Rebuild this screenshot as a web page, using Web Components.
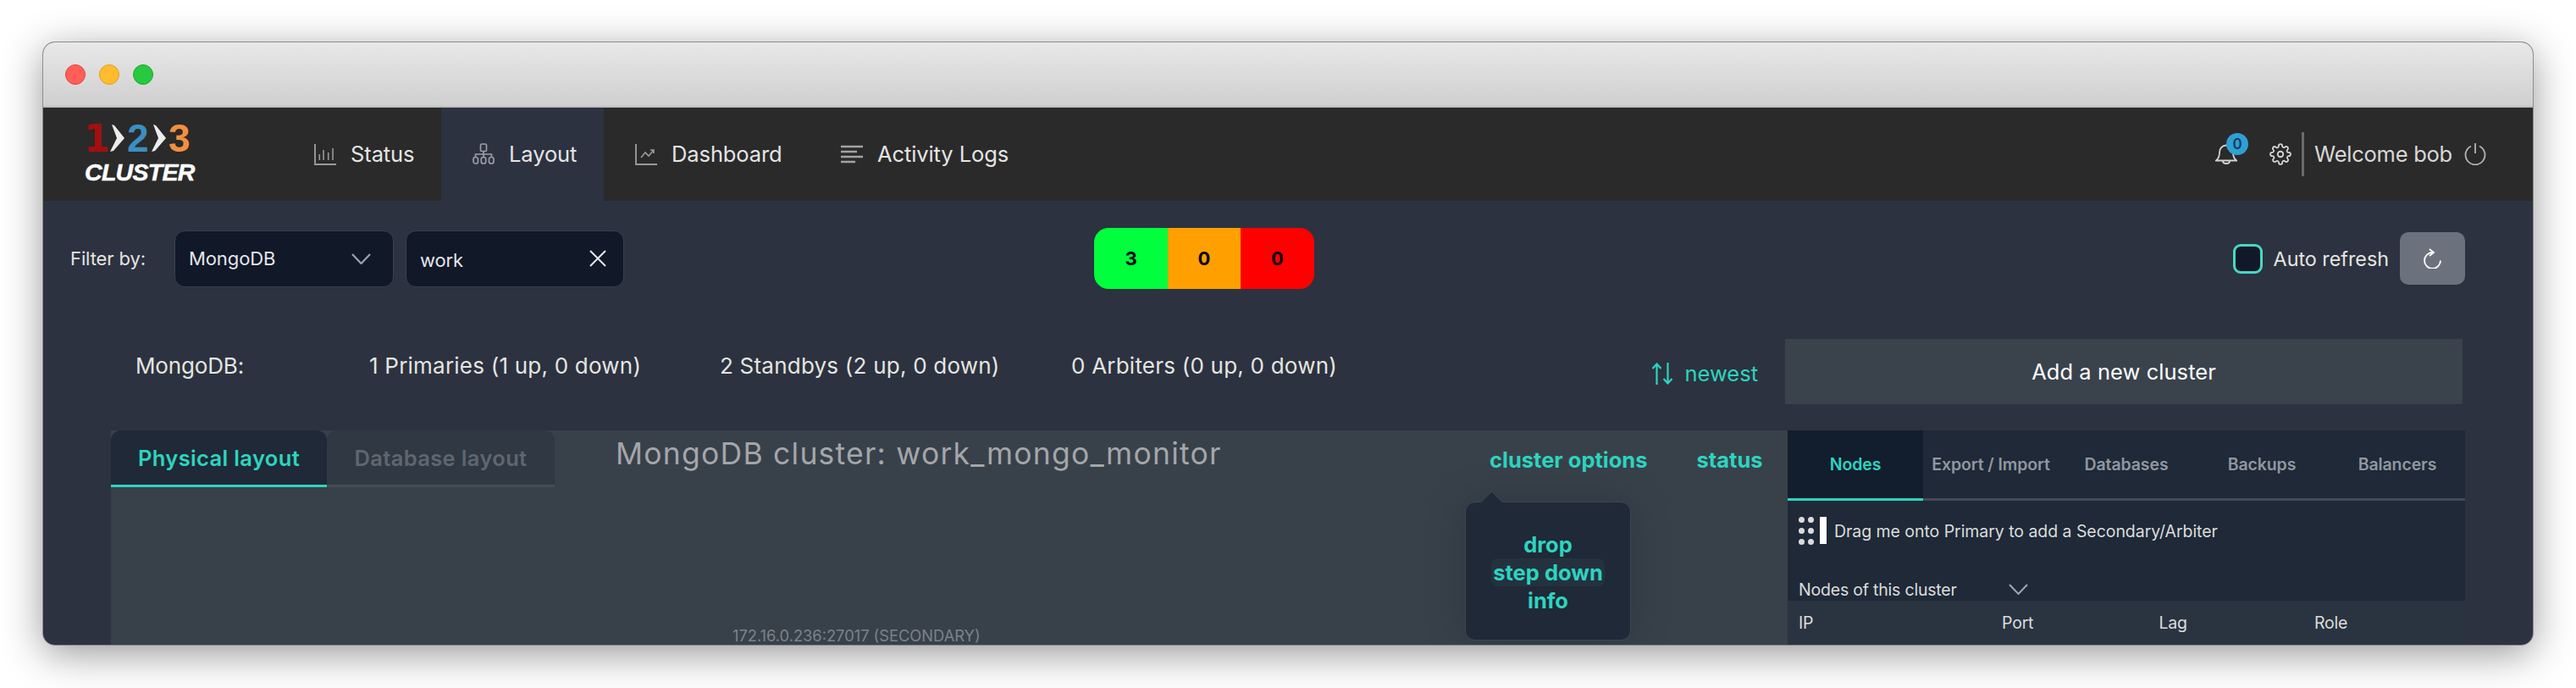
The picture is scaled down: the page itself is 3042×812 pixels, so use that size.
<!DOCTYPE html>
<html><head><meta charset="utf-8">
<style>
html,body{margin:0;padding:0;background:#fff;}
body{height:812px;overflow:hidden;padding:50px 0 0 51px;box-sizing:border-box;font-family:Inter,"Liberation Sans",sans-serif;color:#e5e7eb;}
</style></head><body>
<app-window></app-window>
<script>
function def(name, html){
  customElements.define(name, class extends HTMLElement{
    constructor(){super();this.attachShadow({mode:'open'}).innerHTML=html;}
  });
}
const ICON={
 status:'<svg width="26" height="26" viewBox="0 0 26 26" fill="none" stroke="#9a9a9a" stroke-width="1.6"><path d="M1 1V25H26" stroke-width="1.900"/><path d="M6.300 13V20M11 8V20M16.700 11V20M22 6V20"/></svg>',
 layout:'<svg width="26" height="26" viewBox="0 0 26 26" fill="none" stroke="#9a9ea6" stroke-width="1.700"><rect x="9.500" y="1" width="7" height="8.500" rx="1.500"/><path d="M13 9.500V16M3.500 16.500V13H22.500V16.500"/><rect x="1" y="16.500" width="5.500" height="7.500" rx="2.500"/><rect x="10.250" y="16.500" width="5.500" height="7.500" rx="2.500"/><rect x="19.500" y="16.500" width="5.500" height="7.500" rx="2.500"/></svg>',
 dash:'<svg width="26" height="26" viewBox="0 0 26 26" fill="none" stroke="#9a9a9a" stroke-width="1.600"><path d="M1 1V25H26" stroke-width="1.900"/><path d="M7 17L12 11L16 15L22 8M18 8H22V12"/></svg>',
 logs:'<svg width="26" height="22" viewBox="0 0 26 22" fill="none" stroke="#a3a3a3" stroke-width="2.400"><path d="M0 2H26M0 8H19M0 14H26M0 20H17"/></svg>',
 chev:'<svg width="23" height="13" viewBox="0 0 23 13" fill="none" stroke="#9ca3af" stroke-width="2.200"><path d="M1 1L11.500 12L22 1"/></svg>'
};
const CHEVRON='<svg width="17" height="32" viewBox="0 0 17 32"><polygon points="2,0 5,1 17,16 4,31 0,32 8,16" fill="#ececec"/></svg>';

def('traffic-lights',`<style>:host{display:flex;gap:16px}i{width:24px;height:24px;border-radius:50%;display:block;box-sizing:border-box;border:1px solid}
.r{background:#ff5f57;border-color:#e0443e}.y{background:#febc2e;border-color:#dea123}.g{background:#28c840;border-color:#1aab29}</style><i class="r"></i><i class="y"></i><i class="g"></i>`);

def('title-bar',`<style>:host{display:flex;align-items:center;box-sizing:border-box;height:77px;padding:0 0 0 26px;background:linear-gradient(#e8e8e8,#cfcfcf);border-bottom:2px solid #bdbdbd}</style><traffic-lights></traffic-lights>`);

def('app-logo',`<style>:host{display:flex;flex-direction:column;width:283px;box-sizing:border-box;padding:16px 0 0 48px;font-family:"Liberation Sans",sans-serif;font-weight:700}
.n{display:flex;align-items:baseline;height:40px;padding-left:4px;font-size:46px;line-height:40px}
.one{font-family:"DejaVu Sans",sans-serif;font-size:44px;color:#a50f0f;width:31px;margin-left:-4px}
.c{font-style:italic;font-size:28.500px;line-height:26px;color:#fff;letter-spacing:-.7px;margin-top:7px;padding-left:1px;-webkit-text-stroke:.5px #fff}
svg{display:block;align-self:center;margin-right:3px}.two{width:29px;color:#3a8fc2}.three{color:#f28f3f}</style>
<div class="n"><span class="one">1</span>${CHEVRON}<span class="two">2</span>${CHEVRON}<span class="three">3</span></div>
<div class="c">CLUSTER</div>`);

def('nav-item',`<style>:host{display:flex;align-items:center;box-sizing:border-box;height:110px;padding-left:37px;gap:17px;font-size:25.500px;color:#e5e5e5;letter-spacing:-.1px}
:host([active]){background:#2c3240}
span{display:block;padding-bottom:2px}</style><slot name="icon"></slot><span><slot></slot></span>`);

def('user-menu',`<style>:host{display:flex;align-items:center;margin-left:auto;height:110px;font-size:25.500px;color:#d8d8d8;position:relative}
.bell{position:relative;width:26px;height:26px;margin-right:38px}
.badge{position:absolute;left:13px;top:-12px;width:26px;height:26px;border-radius:50%;background:#2f9fd4;color:#123c5e;font-size:17px;font-weight:600;display:flex;align-items:center;justify-content:center}
.div{width:3px;height:52px;background:#6b6b6b;margin:0 12px 0 12px}
svg{display:block}</style>
<div class="bell"><svg width="26" height="26" viewBox="0 0 26 26" fill="none" stroke="#d4d4d4" stroke-width="1.800"><path d="M1 20.500C4 18 5 15 5 11C5 6 8.500 2.500 13 2.500C17.500 2.500 21 6 21 11C21 15 22 18 25 20.500Z"/><path d="M9 21C9 25 17 25 17 21"/></svg><div class="badge">0</div></div>
<svg width="26" height="26" viewBox="0 0 24 24" fill="none" stroke="#d4d4d4" stroke-width="1.700"><circle cx="12" cy="12" r="3"/><path d="M19.400 15a1.650 1.650 0 0 0 .33 1.820l.06.060a2 2 0 1 1-2.830 2.830l-.06-.060a1.650 1.650 0 0 0-2.820 1.170V21a2 2 0 1 1-4 0v-.090a1.650 1.650 0 0 0-2.820-1.170l-.06.060a2 2 0 1 1-2.830-2.830l.06-.060A1.650 1.650 0 0 0 3.090 14H3a2 2 0 1 1 0-4h.090a1.650 1.650 0 0 0 1.170-2.820l-.06-.060A2 2 0 1 1 7.030 4.290l.06.060A1.650 1.650 0 0 0 10 3.090V3a2 2 0 1 1 4 0v.090a1.650 1.650 0 0 0 2.820 1.170l.06-.060a2 2 0 1 1 2.830 2.830l-.06.060A1.650 1.650 0 0 0 20.910 10H21a2 2 0 1 1 0 4h-.090a1.650 1.650 0 0 0-1.510 1z"/></svg>
<div class="div"></div><span style="padding-bottom:2px;letter-spacing:-.25px">Welcome bob</span>
<svg width="26" height="26" viewBox="0 0 26 26" fill="none" stroke="#b5b5b5" stroke-width="1.800" style="margin:0 55px 0 14px"><path d="M8 3.500A11.500 11.500 0 1 0 18 3.500M13 0V12"/></svg>`);

def('nav-bar',`<style>:host{display:flex;height:110px;background:#2a2a2a}svg{display:block}</style>
<app-logo></app-logo>
<nav-item style="width:187px"><span slot="icon">${ICON.status}</span>Status</nav-item>
<nav-item active style="width:192px"><span slot="icon">${ICON.layout}</span>Layout</nav-item>
<nav-item style="width:243px"><span slot="icon">${ICON.dash}</span>Dashboard</nav-item>
<nav-item style="width:240px"><span slot="icon">${ICON.logs}</span>Activity Logs</nav-item>
<user-menu></user-menu>`);

def('filter-box',`<style>:host{display:flex;align-items:center;justify-content:space-between;box-sizing:border-box;height:67px;background:#111827;border:1.500px solid #374151;border-radius:12px;font-size:22px;color:#e5e7eb;padding:0 20px 0 16px;letter-spacing:-.1px}</style><slot></slot><slot name="end"></slot>`);

def('status-pill',`<style>:host{display:flex;height:72px;width:260px;border-radius:17px;overflow:hidden;font-weight:700;font-size:22px;color:#000}
div{display:flex;align-items:center;justify-content:center}</style>
<div style="background:#00ff3c;width:87px">3</div><div style="background:#ffa000;width:86px">0</div><div style="background:#ff0000;width:87px">0</div>`);

def('refresh-control',`<style>:host{display:flex;align-items:center;margin-left:auto;font-size:23.300px;color:#e5e5e0}
.cb{width:35px;height:35px;box-sizing:border-box;border:3.500px solid #45d9c4;background:#111827;border-radius:9px;margin-right:13px}
.btn{width:77px;height:62px;background:#6c727d;border-radius:10px;margin-left:13px;display:flex;align-items:center;justify-content:center}</style>
<div class="cb"></div><span>Auto refresh</span>
<div class="btn"><svg width="21" height="24" viewBox="0 0 21 24" fill="none" stroke="#fff" stroke-width="1.800" style="display:block"><path d="M10.500 5A9.500 9.500 0 1 0 20 14.500"/><path d="M7 1L12 5L7 9"/></svg></div>`);

def('filter-bar',`<style>:host{display:flex;align-items:center;height:72px;margin-top:32px;padding:0 80px 0 32px;font-size:22px;color:#e5e5e0}
.lbl{width:123px;letter-spacing:-.1px}</style>
<span class="lbl">Filter by:</span>
<filter-box style="width:259px"><span>MongoDB</span><span slot="end" style="display:flex;margin-right:6px">${ICON.chev}</span></filter-box>
<filter-box style="width:258px;margin:0 555px 0 14px"><span style="padding-top:4px">work</span><svg slot="end" width="20" height="20" viewBox="0 0 20 20" stroke="#e5e7eb" stroke-width="2" style="display:block"><path d="M1 1L19 19M19 1L1 19"/></svg></filter-box>
<status-pill></status-pill>
<refresh-control></refresh-control>`);

def('summary-row',`<style>:host{display:flex;height:77px;margin-top:59px;padding:0 83px 0 109px;font-size:26px;color:#e5e5e0;letter-spacing:.22px}
.s{padding-top:19px;line-height:26px;white-space:nowrap}
.new{display:flex;align-items:center;gap:13px;margin-left:auto;color:#2dd4bf;margin-right:32px;padding-top:4px;font-size:25.500px;letter-spacing:0}
.add{width:800px;background:#3a424c;color:#fff;display:flex;align-items:center;justify-content:center;letter-spacing:.05px;font-size:25.500px}
svg{display:block}</style>
<span class="s" style="width:276px;letter-spacing:-.15px">MongoDB:</span>
<span class="s" style="width:414px">1 Primaries (1 up, 0 down)</span>
<span class="s" style="width:415px">2 Standbys (2 up, 0 down)</span>
<span class="s">0 Arbiters (0 up, 0 down)</span>
<span class="new"><svg width="26" height="26" viewBox="0 0 26 26" fill="none" stroke="#2dd4bf" stroke-width="2.200"><path d="M6.500 26V1M1.500 7L6.500 1.500L11.500 7M19.500 0V25M14.500 19L19.500 24.500L24.500 19"/></svg>newest</span>
<div class="add">Add a new cluster</div>`);

def('layout-tab',`<style>:host{display:flex;align-items:center;justify-content:center;box-sizing:border-box;height:67px;border-bottom:3px solid #434c57;background:#2f3843;color:#5f666f;font-size:25.500px;font-weight:600;border-radius:12px 12px 0 0;letter-spacing:.35px;white-space:nowrap}
:host([active]){background:#1f2937;color:#2dd4bf;border-bottom-color:#2dd4bf}</style><slot></slot>`);

def('options-popover',`<style>:host{position:absolute;left:1599px;top:84px;width:196px;height:164px;box-sizing:border-box;padding-top:3px;background:#1f2937;border:1.500px solid #3c4655;border-radius:12px;box-shadow:0 0 50px rgba(0,0,0,.18);display:flex;flex-direction:column;align-items:center;justify-content:center;color:#2dd4bf;font-size:25.500px;font-weight:700;line-height:33px}
.a{position:absolute;left:21px;top:-10px;width:18px;height:18px;background:#1f2937;border-left:1.500px solid #3c4655;border-top:1.500px solid #3c4655;transform:rotate(45deg)}
.h{background:#243240;border-radius:8px;padding:0 2px}</style>
<div class="a"></div><span>drop</span><span class="h">step down</span><span>info</span>`);

def('cluster-panel',`<style>:host{display:block;position:relative;flex:1;height:253px;background:#38414a;overflow:hidden}
.top{display:flex;align-items:flex-start}
.t{margin:8px 0 0 72px;font-size:35.500px;line-height:40px;color:#a4a6aa;letter-spacing:1.230px;white-space:nowrap}
.act{position:absolute;top:20px;left:1628px;color:#2dd4bf;font-size:25.500px;font-weight:700;line-height:30px;white-space:nowrap}
.node{position:absolute;left:734px;top:232px;font-size:18.300px;line-height:20px;color:#7b828b;white-space:nowrap}</style>
<div class="top"><layout-tab active style="width:255px">Physical layout</layout-tab><layout-tab style="width:269px">Database layout</layout-tab><div class="t">MongoDB cluster: work_mongo_monitor</div></div>
<div class="act"><span>cluster options</span><span style="margin-left:58px">status</span></div>
<options-popover></options-popover>
<div class="node">172.16.0.236:27017 (SECONDARY)</div>`);

def('side-tab',`<style>:host{display:flex;align-items:center;justify-content:center;height:83px;box-sizing:border-box;border-bottom:3px solid #434c57;font-size:19.500px;font-weight:600;color:#9097a0;letter-spacing:-.1px;white-space:nowrap}
:host([active]){background:#121e2e;color:#2dd4bf;border-bottom-color:#2dd4bf}</style><slot></slot>`);

def('side-panel',`<style>:host{display:block;width:800px;height:253px;background:#1f2937;font-size:19.500px;color:#dcdcdc;overflow:hidden;letter-spacing:-.2px}
.tabs{display:grid;grid-template-columns:repeat(5,160px)}
.drag{display:flex;align-items:center;height:32px;margin-top:19px;padding-left:13px;letter-spacing:-.05px}
.drag span{padding-top:2px}
.dots{display:grid;grid-template-columns:7px 7px;column-gap:4px;row-gap:6px;margin-right:7px}
.dots i{width:7px;height:7px;border-radius:50%;background:#dcdcdc}
.bar{width:8px;height:32px;background:#fff;margin-right:9px}
.sec{display:flex;align-items:center;height:27px;margin-top:40px;padding-left:13px}
.sec span{width:248px}
.hdr{display:grid;grid-template-columns:240px 185.500px 183.500px 1fr;height:52px;align-items:center;padding-left:13px;background:#2a3440}
svg{display:block}</style>
<div class="tabs"><side-tab active>Nodes</side-tab><side-tab>Export / Import</side-tab><side-tab>Databases</side-tab><side-tab>Backups</side-tab><side-tab>Balancers</side-tab></div>
<div class="drag"><div class="dots"><i></i><i></i><i></i><i></i><i></i><i></i></div><div class="bar"></div><span>Drag me onto Primary to add a Secondary/Arbiter</span></div>
<div class="sec"><span>Nodes of this cluster</span><svg width="23" height="13" viewBox="0 0 23 13" fill="none" stroke="#a0a6ae" stroke-width="2"><path d="M1 1L11.500 12L22 1"/></svg></div>
<div class="hdr"><div>IP</div><div>Port</div><div>Lag</div><div>Role</div></div>`);

def('work-area',`<style>:host{display:flex;margin-top:31px;padding:0 80px}</style><cluster-panel></cluster-panel><side-panel></side-panel>`);

def('app-window',`<style>:host{display:block;width:2940px;height:711px;overflow:hidden;border-radius:14px;background:#2c3240;box-shadow:0 0 0 1px #8e8e8e,0 10px 48px rgba(0,0,0,.42)}
</style><title-bar></title-bar><nav-bar></nav-bar><filter-bar></filter-bar><summary-row></summary-row><work-area></work-area>`);
</script>
</body></html>
